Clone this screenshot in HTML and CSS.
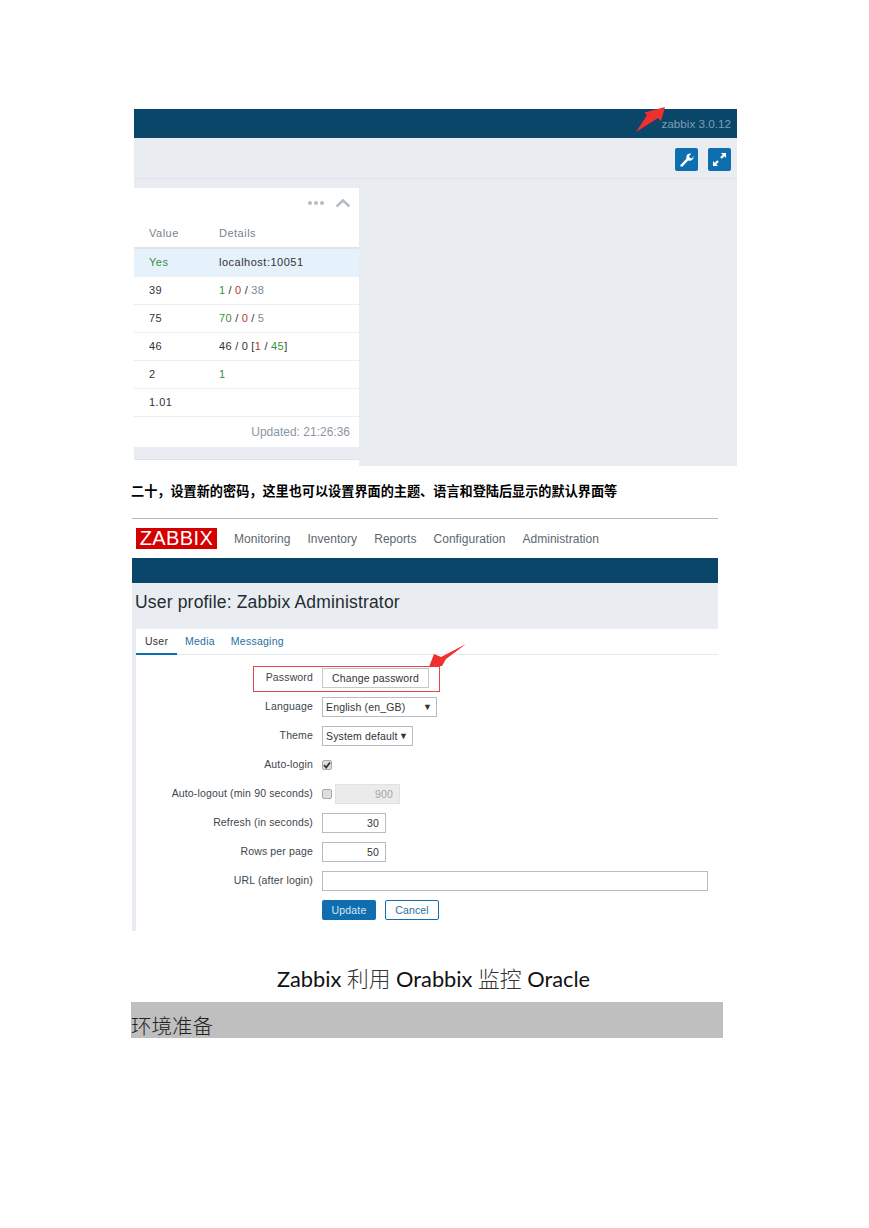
FILE: index.html
```html
<!DOCTYPE html>
<html lang="zh-CN">
<head>
<meta charset="utf-8">
<title>Zabbix 利用 Orabbix 监控 Oracle</title>
<link rel="stylesheet" href="styles.css">
</head>
<body>
<main class="page">
  <section class="shot-one">
    <div class="topbar"><span class="version">zabbix 3.0.12</span></div>
    <div class="toolbar">
      <button class="tool-btn" aria-label="Edit">
        <svg viewBox="0 0 23 23" width="23" height="23"><path d="M6 18.5 L5 17.5 L11.5 10.6 C10.9 8.6 11.6 6.9 13.1 6 C14.2 5.4 15.3 5.3 16.4 5.7 L14 8.1 L15 10 L17 10.4 L18.4 8 C18.7 9.5 18.3 10.9 17.1 11.9 C15.9 12.8 14.5 12.9 13.2 12.4 L7.3 18.8 Z" fill="#fff"/></svg>
      </button>
      <button class="tool-btn" aria-label="Fullscreen">
        <svg viewBox="0 0 23 23" width="23" height="23"><path d="M13 5 H18 V10 L16.3 8.3 L13.8 10.8 L12.2 9.2 L14.7 6.7 Z M5 18 V13 L6.7 14.7 L9.2 12.2 L10.8 13.8 L8.3 16.3 L10 18 Z" fill="#fff"/></svg>
      </button>
    </div>
    <div class="dash">
      <div class="widget">
        <div class="widget-head">
          <span class="dots"><i></i><i></i><i></i></span>
          <svg class="chev" viewBox="0 0 16 10" width="16" height="10"><path d="M1.5 8.5 L8 2.5 L14.5 8.5" fill="none" stroke="#b4bcc4" stroke-width="2.4"/></svg>
        </div>
        <div class="row row-head"><span class="c1">Value</span><span>Details</span></div>
        <div class="row row-hi"><span class="c1 green">Yes</span><span>localhost:10051</span></div>
        <div class="row"><span class="c1">39</span><span class="tight"><b class="green">1</b> / <b class="red">0</b> / <b class="grey">38</b></span></div>
        <div class="row"><span class="c1">75</span><span class="tight"><b class="green">70</b> / <b class="red">0</b> / <b class="grey">5</b></span></div>
        <div class="row"><span class="c1">46</span><span class="tight">46 / 0 [<b class="red">1</b> / <b class="green">45</b>]</span></div>
        <div class="row"><span class="c1">2</span><span class="green">1</span></div>
        <div class="row"><span class="c1">1.01</span><span></span></div>
        <div class="widget-foot">Updated: 21:26:36</div>
      </div>
      <div class="stub"></div>
    </div>
    <svg class="arrow-one" viewBox="0 0 32 28" width="32" height="28"><path d="M1 26 L12 9 L9.5 6.5 L30 1 L26 15 L23 12 Z" fill="#f0302c"/></svg>
  </section>

  <h2 class="step">二十，设置新的密码，这里也可以设置界面的主题、语言和登陆后显示的默认界面等</h2>

  <section class="shot-two">
    <nav class="nav">
      <span class="logo">ZABBIX</span>
      <span class="nav-links"><a>Monitoring</a><a>Inventory</a><a>Reports</a><a>Configuration</a><a>Administration</a></span>
    </nav>
    <div class="bluebar"></div>
    <h1 class="title-band">User profile: Zabbix Administrator</h1>
    <div class="panel">
      <div class="tabs"><span class="tab active">User</span><span class="tab">Media</span><span class="tab">Messaging</span></div>
      <div class="form">
        <div class="redbox"></div>
        <svg class="arrow-two" viewBox="0 0 40 26" width="40" height="26"><path d="M1 24 L6 11 L13 14 L38 1 L18 16 L14 23 Z" fill="#f0302c"/></svg>
        <label>Password</label>
        <div class="ctl"><span class="box btn-plain">Change password</span></div>
        <label>Language</label>
        <div class="ctl"><span class="box select w-lang">English (en_GB)<i>▼</i></span></div>
        <label>Theme</label>
        <div class="ctl"><span class="box select w-theme">System default<i>▼</i></span></div>
        <label>Auto-login</label>
        <div class="ctl"><span class="check"><svg viewBox="0 0 10 10" width="10" height="10"><path d="M2 5 L4.2 7.5 L8 2.5" fill="none" stroke="#333" stroke-width="1.8"/></svg></span></div>
        <label>Auto-logout (min 90 seconds)</label>
        <div class="ctl"><span class="check"></span><span class="box num disabled">900</span></div>
        <label>Refresh (in seconds)</label>
        <div class="ctl"><span class="box num w-num">30</span></div>
        <label>Rows per page</label>
        <div class="ctl"><span class="box num w-num">50</span></div>
        <label>URL (after login)</label>
        <div class="ctl"><span class="box w-url"></span></div>
        <span></span>
        <div class="ctl actions"><span class="btn primary">Update</span><span class="btn ghost">Cancel</span></div>
      </div>
    </div>
  </section>

  <h1 class="doc-title">Zabbix <span class="cjk">利用</span> Orabbix <span class="cjk">监控</span> Oracle</h1>
  <h2 class="doc-band">环境准备</h2>
</main>
</body>
</html>
```
FILE: styles.css
```css
* { box-sizing: border-box; }
html, body { margin: 0; background: #fff; }
body { font-family: "Liberation Sans", Arial, sans-serif; color: #333; }
.page { padding-top: 109px; }

/* first screenshot */
.shot-one { position: relative; margin-left: 134px; width: 603px; height: 357px; background: #e9ecf0; }
.topbar { height: 29px; background: #0a466a; display: flex; justify-content: flex-end; align-items: center; padding-right: 6px; }
.version { font-size: 11.7px; color: #7f9db2; }
.toolbar { height: 41px; border-bottom: 1px solid #dfe3e7; display: flex; justify-content: flex-end; gap: 10px; padding: 10px 6px 0 0; }
.tool-btn { width: 23px; height: 23px; padding: 0; border: 0; border-radius: 2px; background: #0f6eaf; display: block; }
.tool-btn svg { display: block; }
.dash { height: 287px; padding-top: 9px; overflow: hidden; display: flex; flex-direction: column; gap: 12px; }
.widget, .stub { width: 225px; background: #fff; flex: none; }
.stub { height: 10px; border-top: 1px solid #dfe3e7; }
.widget { height: 259px; font-size: 11px; letter-spacing: .5px; }
.widget-head { height: 30px; display: flex; justify-content: flex-end; align-items: center; gap: 11px; padding-right: 8px; }
.dots { display: flex; gap: 2px; }
.dots i { width: 4px; height: 4px; border-radius: 50%; background: #b4bcc4; }
.row { height: 28px; display: flex; align-items: center; padding: 0 0 2px 15px; border-bottom: 1px solid #ebeef0; color: #333; }
.row b { font-weight: normal; }
.row-head { height: 31px; padding-bottom: 0; color: #77838f; border-bottom: 2px solid #dfe4e8; }
.row-hi { background: #e5f1fb; }
.c1 { width: 70px; }
.tight { word-spacing: -.6px; }
.green { color: #3a8f44; }
.red { color: #b23a3a; }
.grey { color: #7b8894; }
.widget-foot { height: 30px; display: flex; align-items: center; justify-content: flex-end; padding-right: 9px; font-size: 12px; letter-spacing: 0; color: #8a97a3; }
.arrow-one { position: absolute; left: 501px; top: -3px; }

/* step heading */
.step { margin: 15px 0 17px 131px; font: 700 13.15px/20px "Noto Sans CJK SC", sans-serif; color: #000; }

/* second screenshot */
.shot-two { margin-left: 132px; width: 586px; height: 413px; font-size: 10.5px; letter-spacing: .15px; }
.nav { height: 40px; border-top: 1px solid #b9b9b9; display: flex; align-items: center; padding-left: 4px; gap: 17px; }
.logo { width: 81px; height: 21px; background: #d40000; color: #fff; font-size: 20px; line-height: 21px; text-align: center; letter-spacing: .4px; }
.nav-links { display: flex; gap: 17px; color: #5c6770; font-size: 12px; letter-spacing: .04px; }
.bluebar { height: 25px; background: #0a466a; }
.title-band { margin: 0; height: 46px; background: #e9ecf0; padding: 8px 0 0 3px; font-size: 17.5px; font-weight: normal; line-height: 22px; letter-spacing: .18px; color: #1f2c33; }
.panel { height: 302px; border-left: 4px solid #e9edf2; }
.tabs { height: 26px; border-bottom: 1px solid #e4e8ec; display: flex; letter-spacing: .25px; }
.tab { height: 26px; padding: 0 8px; line-height: 24px; color: #1f6f9f; }
.tab.active { width: 41px; padding-left: 9px; color: #333; border-bottom: 2px solid #0f6eaf; }
.form { position: relative; display: grid; grid-template-columns: 177px 1fr; column-gap: 9px; row-gap: 9px; grid-auto-rows: 20px; padding-top: 13px; }
.form label { text-align: right; line-height: 18px; color: #3d464d; }
.ctl { display: flex; align-items: center; gap: 3px; }
.box { height: 20px; border: 1px solid #b6bcc1; background: #fff; display: flex; align-items: center; color: #333; white-space: nowrap; }
.btn-plain { width: 107px; justify-content: center; border-color: #c4c9cd; }
.select { justify-content: space-between; padding: 0 4px 0 3px; }
.select i { font-style: normal; font-size: 9px; }
.w-lang { width: 115px; }
.w-theme { width: 91px; }
.num { justify-content: flex-end; padding-right: 6px; }
.w-num { width: 64px; }
.w-url { width: 386px; }
.disabled { width: 65px; background: #ebebeb; border-color: #e2e2e2; color: #a5a5a5; }
.check { width: 10px; height: 10px; border: 1px solid #a9a9a9; border-radius: 2px; background: #dedede; position: relative; }
.check svg { position: absolute; left: -1px; top: -1px; }
.actions { gap: 9px; }
.btn { width: 54px; height: 20px; border-radius: 2px; display: flex; align-items: center; justify-content: center; }
.primary { background: #0f6eaf; color: #d7e6f1; }
.ghost { border: 1px solid #0f6eaf; color: #1f6f9f; }
.redbox { position: absolute; left: 117px; top: 11px; width: 187px; height: 26px; border: 1px solid #e0484c; }
.arrow-two { position: absolute; left: 292px; top: -12px; }

/* document footer */
.doc-title { margin: 33px 2px 8px 0; text-align: center; font: 400 21.8px/30px Lato, "Noto Sans CJK SC", sans-serif; color: #111; }
.cjk { font-weight: 300; color: #333; }
.doc-band { margin: 0 0 0 131px; width: 592px; height: 36px; padding-top: 10px; background: #bfbfbf; font: 300 20.5px/26px "Noto Sans CJK SC", sans-serif; color: #222; }
```
